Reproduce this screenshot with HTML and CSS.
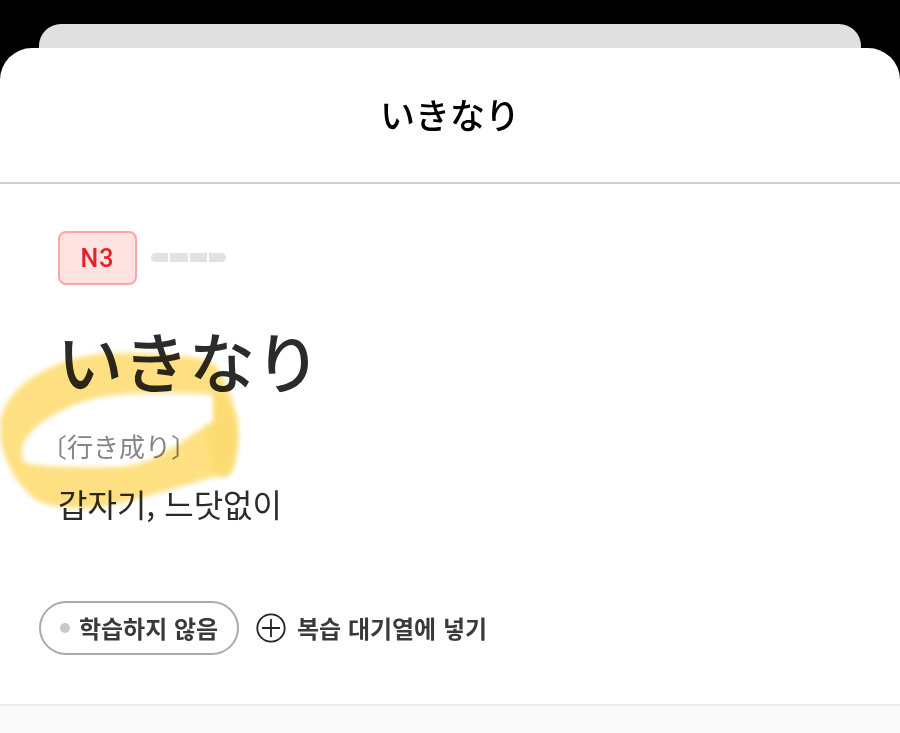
FILE: index.html
```html
<!DOCTYPE html>
<html lang="ko">
<head>
<meta charset="utf-8">
<title>いきなり</title>
<link rel="stylesheet" href="styles.css">
</head>
<body>
<div class="back-card"></div>
<main class="sheet">
  <header class="sheet-header"><h1 class="sheet-title" lang="ja">いきなり</h1></header>
  <section class="entry">
    <div class="level-row">
      <span class="level-badge">N3</span>
      <span class="freq"><i></i><i></i><i></i><i></i></span>
    </div>
    <div class="word" lang="ja">いきなり</div>
    <div class="reading" lang="ja">〔行き成り〕</div>
    <div class="meaning">갑자기, 느닷없이</div>
    <svg class="marker" viewBox="0 340 260 180" aria-hidden="true">
      <path class="marker-body" fill-rule="evenodd" d="M120 353C90 352 60 360 33 377C18 386 6 400 1 417C-1 430 0 445 5 456C10 470 20 488 36 500C50 508 80 510 100 507C130 502 165 491 200 481L218 476C224 479 230 476 233 470C238 455 240 435 237 417C234 405 230 392 227 387C222 375 218 367 213 363C200 356 160 353 120 353ZM213 395C180 392 145 393 117 395C95 397 80 402 67 408C50 416 40 423 33 430C27 436 22 444 22 452C22 458 22 462 26 463C45 467 80 468 117 467C130 466 142 463 150 460C160 455 170 449 180 443L205 426C208 424 212 424 213 420Z"/>
      <path class="marker-end" d="M213 392C222 398 233 405 237 417C240 435 238 455 233 470C230 476 224 479 218 476C210 470 207 445 206 426C208 424 212 424 213 420Z"/>
    </svg>
    <div class="actions">
      <span class="status"><i class="dot"></i>학습하지 않음</span>
      <span class="queue">
        <svg class="plus" viewBox="0 0 30 30" aria-hidden="true"><circle cx="15" cy="15" r="13.7"/><path d="M15 6v18M6 15h18"/></svg>
        복습 대기열에 넣기
      </span>
    </div>
  </section>
  <div class="next-section"></div>
</main>
</body>
</html>
```
FILE: styles.css
```css
html, body { margin: 0; height: 100%; }
body {
  background: #000;
  padding-top: 24px;
  box-sizing: border-box;
  height: 733px;
  overflow: hidden;
  display: flex;
  flex-direction: column;
  font-family: "Noto Sans CJK KR", "Noto Sans", sans-serif;
  color: #2b2b2b;
}
.back-card {
  height: 24px;
  flex: none;
  margin: 0 39px;
  background: #e0e0e0;
  border-radius: 22px 22px 0 0;
}
.sheet {
  flex: 1;
  display: flex;
  flex-direction: column;
  background: #fff;
  border-radius: 32px 32px 0 0;
}
.sheet-header {
  height: 136px;
  flex: none;
  box-sizing: border-box;
  border-bottom: 2px solid #cfcfcf;
  display: flex;
  align-items: center;
  justify-content: center;
}
.sheet-title {
  margin: 0 0 4px;
  font: 500 35px/1 "Noto Sans CJK JP", sans-serif;
  color: #000;
}
.entry {
  flex: 1;
  position: relative;
  padding: 47px 0 0 39px;
}
.level-row {
  display: flex;
  align-items: center;
  gap: 14px;
  margin-left: 19px;
}
.level-badge {
  box-sizing: border-box;
  width: 79px;
  height: 54px;
  display: flex;
  align-items: center;
  justify-content: center;
  background: #fee2e2;
  border: 2px solid #fda4a6;
  border-radius: 8px;
  color: #e32127;
  font: 500 25px/1 Roboto, "Liberation Sans", sans-serif;
  letter-spacing: 1px;
}
.freq { display: flex; gap: 2px; margin-top: -1px; }
.freq i {
  width: 17.25px;
  height: 9px;
  background: #e2e2e2;
}
.freq i:first-child { border-radius: 5px 0 0 5px; }
.freq i:last-child { border-radius: 0 5px 5px 0; }
.word {
  margin: 28px 0 0 18px;
  font: 500 66px/92px "Noto Sans CJK JP", sans-serif;
  color: #2b2b2b;
}
.reading {
  margin: 22px 0 0 2px;
  font: 400 26px/38px "Noto Sans CJK JP", sans-serif;
  color: #858585;
}
.meaning {
  margin: 15px 0 0 19px;
  font: 400 32px/46px "Noto Sans CJK KR", sans-serif;
  color: #2b2b2b;
}
.marker {
  position: absolute;
  left: 0;
  top: 156px;
  width: 260px;
  height: 180px;
  mix-blend-mode: multiply;
  filter: blur(2.5px);
}
.marker-body { fill: #fee082; }
.marker-end { fill: #fcdc72; }
.actions {
  display: flex;
  align-items: center;
  gap: 17px;
  margin-top: 75px;
  font: 700 24px/1 "Noto Sans CJK KR", sans-serif;
  color: #3a3a3a;
}
.status {
  box-sizing: border-box;
  height: 54px;
  width: 200px;
  display: flex;
  align-items: center;
  justify-content: center;
  gap: 9px;
  border: 2px solid #aaa;
  border-radius: 27px;
}
.dot {
  width: 10px;
  height: 10px;
  border-radius: 50%;
  background: #c9c9c9;
}
.queue { display: flex; align-items: center; gap: 11px; }
.plus { width: 30px; height: 30px; }
.plus circle, .plus path { fill: none; stroke: #222; stroke-width: 1.8; }
.next-section {
  height: 27px;
  flex: none;
  background: #fafafa;
  border-top: 2px solid #eee;
}
```
